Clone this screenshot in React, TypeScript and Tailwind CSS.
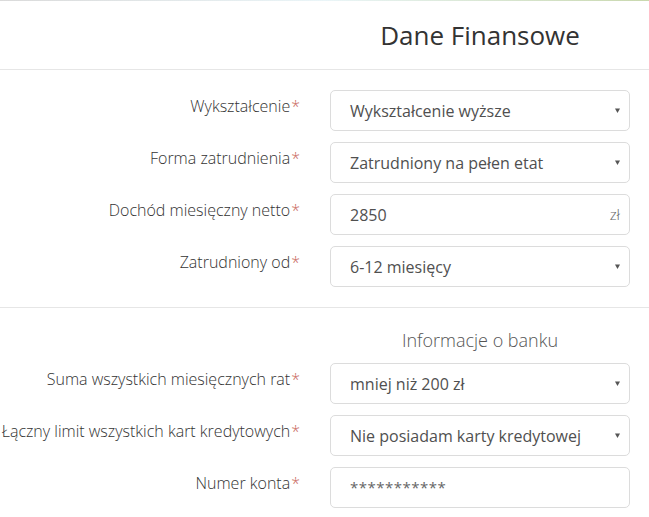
import { memo } from "react";

interface FieldProps {
  label: string;
  value: string;
  kind?: "select" | "input";
  suffix?: string;
  muted?: boolean;
}

const Caret = () => (
  <svg width="5" height="5" viewBox="0 0 5 5" className="mr-[2px] shrink-0">
    <polygon points="0,0.5 5,0.5 2.5,5" fill="#555" />
  </svg>
);

const Field = ({ label, value, kind = "select", suffix, muted }: FieldProps) => {
  return (
    <div className="flex h-[41px] items-start">
      <div className="flex w-[300px] shrink-0 justify-end whitespace-nowrap pt-[6px] text-[16px] font-light leading-5 text-[#333]">
        <span>{label}</span>
        <span className="ml-[1px] text-[#c96a5e]">*</span>
      </div>
      <div className="ml-[30px] flex h-[41px] w-[300px] shrink-0 items-center justify-between rounded-[5px] border border-[#dcdcdc] bg-white pl-[19px] pr-[7px]">
        <span
          className={
            muted
              ? "text-[15px] tracking-[0.5px] text-[#666]"
              : "text-[16px] text-[#505050]"
          }
        >
          {value}
        </span>
        {kind === "select" ? (
          <Caret />
        ) : (
          <span className="pr-[2px] text-[15px] font-light text-[#666]">{suffix}</span>
        )}
      </div>
    </div>
  );
};

const App = () => {
  return (
    <section className="min-h-[517px] w-[649px] overflow-hidden bg-white font-['Open_Sans',sans-serif]">
      <div className="h-px w-full bg-gradient-to-r from-[#dadada] via-[#eaf5f8] to-[#c9d8ae]" />

      <div className="mt-[14px] flex">
        <div className="w-[330px] shrink-0" />
        <h1 className="w-[300px] text-center text-[26px] leading-10 text-[#333]">
          Dane Finansowe
        </h1>
      </div>

      <hr className="mt-[14px] border-t border-[#e6e6e6]" />

      <div className="mt-[20px] flex flex-col gap-[11px]">
        <Field label="Wykształcenie" value="Wykształcenie wyższe" />
        <Field label="Forma zatrudnienia" value="Zatrudniony na pełen etat" />
        <Field label="Dochód miesięczny netto" value="2850" kind="input" suffix="zł" />
        <Field label="Zatrudniony od" value="6-12 miesięcy" />
      </div>

      <hr className="mt-[20px] border-t border-[#e6e6e6]" />

      <div className="mt-[19px] flex">
        <div className="w-[330px] shrink-0" />
        <h2 className="w-[300px] text-center text-[18px] font-light leading-[26px] text-[#555]">
          Informacje o banku
        </h2>
      </div>

      <div className="mt-[10px] flex flex-col gap-[11px]">
        <Field label="Suma wszystkich miesięcznych rat" value="mniej niż 200 zł" />
        <Field
          label="Łączny limit wszystkich kart kredytowych"
          value="Nie posiadam karty kredytowej"
        />
        <Field label="Numer konta" value="***********" kind="input" muted />
      </div>
    </section>
  );
};

export default memo(App);
